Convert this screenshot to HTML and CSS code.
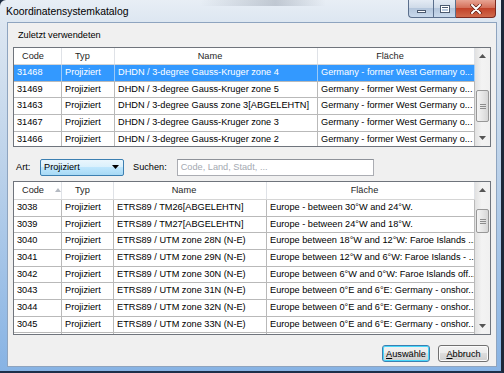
FILE: index.html
```html
<!DOCTYPE html>
<html>
<head>
    <meta charset="utf-8">
    <title>Koordinatensystemkatalog</title>
    <link rel="stylesheet" href="styles.css">
</head>
<body>
<div class="window">
    <div class="titlebar">
        <span class="title">Koordinatensystemkatalog</span>
        <div class="caption">
            <span class="cap cap-min"><span class="min-bar"></span></span>
            <span class="cap cap-max"><span class="max-box"></span></span>
            <span class="cap cap-close">
                <svg width="12" height="10" viewBox="0 0 12 10"><path d="M2 1 L10 9 M10 1 L2 9" stroke="#5a1a10" stroke-width="3.4" stroke-linecap="round"/><path d="M2 1 L10 9 M10 1 L2 9" stroke="#fff" stroke-width="2" stroke-linecap="round"/></svg>
            </span>
        </div>
    </div>

    <div class="client">
        <div class="section-label">Zuletzt verwendeten</div>

        <div class="listview recent">
            <div class="lv-body">
                <div class="lv-row lv-head">
                    <div class="hcell h-code">Code</div>
                    <div class="hcell h-typ">Typ</div>
                    <div class="hcell">Name</div>
                    <div class="hcell">Fläche</div>
                </div>
                <div class="lv-row selected">
                    <div class="cell">31468</div>
                    <div class="cell">Projiziert</div>
                    <div class="cell">DHDN / 3-degree Gauss-Kruger zone 4</div>
                    <div class="cell">Germany - former West Germany o...</div>
                </div>
                <div class="lv-row">
                    <div class="cell">31469</div>
                    <div class="cell">Projiziert</div>
                    <div class="cell">DHDN / 3-degree Gauss-Kruger zone 5</div>
                    <div class="cell">Germany - former West Germany o...</div>
                </div>
                <div class="lv-row">
                    <div class="cell">31463</div>
                    <div class="cell">Projiziert</div>
                    <div class="cell">DHDN / 3-degree Gauss zone 3[ABGELEHTN]</div>
                    <div class="cell">Germany - former West Germany o...</div>
                </div>
                <div class="lv-row">
                    <div class="cell">31467</div>
                    <div class="cell">Projiziert</div>
                    <div class="cell">DHDN / 3-degree Gauss-Kruger zone 3</div>
                    <div class="cell">Germany - former West Germany o...</div>
                </div>
                <div class="lv-row">
                    <div class="cell">31466</div>
                    <div class="cell">Projiziert</div>
                    <div class="cell">DHDN / 3-degree Gauss-Kruger zone 2</div>
                    <div class="cell">Germany - former West Germany o...</div>
                </div>
            </div>
            <div class="vscroll">
                <div class="sb-btn"><svg width="7" height="4" viewBox="0 0 7 4"><path d="M0 4 L3.5 0 L7 4 Z" fill="#555"/></svg></div>
                <div class="sb-track"><div class="sb-thumb thumb-recent"><span class="grip"></span></div></div>
                <div class="sb-btn"><svg width="7" height="4" viewBox="0 0 7 4"><path d="M0 0 L3.5 4 L7 0 Z" fill="#555"/></svg></div>
            </div>
        </div>

        <div class="filter">
            <span class="flabel">Art:</span>
            <div class="combo">
                <span>Projiziert</span>
                <svg width="7" height="4" viewBox="0 0 7 4"><path d="M0 0 L3.5 4 L7 0 Z" fill="#000"/></svg>
            </div>
            <span class="flabel search-label">Suchen:</span>
            <div class="search">Code, Land, Stadt, ...</div>
        </div>

        <div class="listview catalog">
            <div class="lv-body">
                <div class="lv-row lv-head">
                    <div class="hcell h-code">Code <svg class="sort" width="6" height="4" viewBox="0 0 6 4"><path d="M0 4 L3 0 L6 4 Z" fill="#b5bac2"/></svg></div>
                    <div class="hcell h-typ">Typ</div>
                    <div class="hcell">Name</div>
                    <div class="hcell">Fläche</div>
                </div>
                <div class="lv-row">
                    <div class="cell">3038</div>
                    <div class="cell">Projiziert</div>
                    <div class="cell">ETRS89 / TM26[ABGELEHTN]</div>
                    <div class="cell">Europe - between 30°W and 24°W.</div>
                </div>
                <div class="lv-row">
                    <div class="cell">3039</div>
                    <div class="cell">Projiziert</div>
                    <div class="cell">ETRS89 / TM27[ABGELEHTN]</div>
                    <div class="cell">Europe - between 24°W and 18°W.</div>
                </div>
                <div class="lv-row">
                    <div class="cell">3040</div>
                    <div class="cell">Projiziert</div>
                    <div class="cell">ETRS89 / UTM zone 28N (N-E)</div>
                    <div class="cell">Europe between 18°W and 12°W: Faroe Islands ...</div>
                </div>
                <div class="lv-row">
                    <div class="cell">3041</div>
                    <div class="cell">Projiziert</div>
                    <div class="cell">ETRS89 / UTM zone 29N (N-E)</div>
                    <div class="cell">Europe between 12°W and 6°W: Faroe Islands - ...</div>
                </div>
                <div class="lv-row">
                    <div class="cell">3042</div>
                    <div class="cell">Projiziert</div>
                    <div class="cell">ETRS89 / UTM zone 30N (N-E)</div>
                    <div class="cell">Europe between 6°W and 0°W: Faroe Islands off...</div>
                </div>
                <div class="lv-row">
                    <div class="cell">3043</div>
                    <div class="cell">Projiziert</div>
                    <div class="cell">ETRS89 / UTM zone 31N (N-E)</div>
                    <div class="cell">Europe between 0°E and 6°E: Germany - onshor...</div>
                </div>
                <div class="lv-row">
                    <div class="cell">3044</div>
                    <div class="cell">Projiziert</div>
                    <div class="cell">ETRS89 / UTM zone 32N (N-E)</div>
                    <div class="cell">Europe between 0°E and 6°E: Germany - onshor...</div>
                </div>
                <div class="lv-row">
                    <div class="cell">3045</div>
                    <div class="cell">Projiziert</div>
                    <div class="cell">ETRS89 / UTM zone 33N (N-E)</div>
                    <div class="cell">Europe between 0°E and 6°E: Germany - onshor...</div>
                </div>
                <div class="lv-row">
                    <div class="cell"></div>
                    <div class="cell"></div>
                    <div class="cell"></div>
                    <div class="cell"></div>
                </div>
            </div>
            <div class="vscroll">
                <div class="sb-btn"><svg width="7" height="4" viewBox="0 0 7 4"><path d="M0 4 L3.5 0 L7 4 Z" fill="#555"/></svg></div>
                <div class="sb-track"><div class="sb-thumb thumb-catalog"><span class="grip"></span></div></div>
                <div class="sb-btn"><svg width="7" height="4" viewBox="0 0 7 4"><path d="M0 0 L3.5 4 L7 0 Z" fill="#555"/></svg></div>
            </div>
        </div>

        <div class="actions">
            <button class="btn btn-default"><u>A</u>uswähle</button>
            <button class="btn"><u>A</u>bbruch</button>
        </div>
    </div>
</div>
</body>
</html>
```

FILE: styles.css
```css
* {
    box-sizing: border-box;
}

body {
    margin: 0;
    width: 504px;
    height: 373px;
    overflow: hidden;
    font-family: "Liberation Sans", Arial, sans-serif;
    font-size: 9.2px;
    color: #000;
    background: #1d2b40;
}

.window {
    width: 504px;
    height: 373px;
    display: flex;
    flex-direction: column;
    background: linear-gradient(180deg, #e8eef5 0, #dce6f1 24px, #bcd2ea 45%, #87b3e4 100%);
    border-right: 3px solid #1c2738;
    border-bottom: 2px solid #1e2f4a;
    border-top-left-radius: 6px;
}

.titlebar {
    height: 22px;
    display: flex;
    align-items: flex-start;
    background: linear-gradient(90deg, rgba(255,255,255,0) 40%, rgba(120,130,145,0.35) 55%, rgba(255,255,255,0) 65%) top / 100% 6px no-repeat;
}

.title {
    padding: 5px 0 0 6px;
    font-size: 10.4px;
    line-height: 14px;
    color: #000;
}

.caption {
    margin-left: auto;
    margin-right: 5px;
    display: flex;
    height: 18px;
}

.cap {
    height: 18px;
    display: flex;
    align-items: center;
    justify-content: center;
    border: 1px solid #5b6f8c;
    border-top: none;
}

.cap-min {
    width: 25px;
    border-bottom-left-radius: 4px;
    border-right: none;
    background: linear-gradient(180deg, #e4ebf4 0, #cdd9e8 50%, #b4c6dc 50%, #c9d9ec 100%);
}

.cap-max {
    width: 23px;
    background: linear-gradient(180deg, #e4ebf4 0, #cdd9e8 50%, #b4c6dc 50%, #c9d9ec 100%);
}

.cap-close {
    width: 40px;
    border-left: none;
    border-bottom-right-radius: 4px;
    border-color: #7b2a20;
    background: linear-gradient(180deg, #e8a493 0, #d4705a 45%, #c2432a 50%, #d06a4c 100%);
}

.min-bar {
    width: 9px;
    height: 3px;
    margin-top: 5px;
    background: #fff;
    border: 1px solid #4b5a70;
}

.max-box {
    width: 10px;
    height: 8px;
    border: 1px solid #4b5a70;
    border-top-width: 3px;
    background: #fff;
    box-shadow: inset 0 0 0 1px #fff;
}

.max-box {
    background: transparent;
    outline: 1px solid #fff;
    outline-offset: -2px;
}

.client {
    flex: 1;
    margin: 0 4px 4px 7px;
    padding: 5px 5px 4px 5px;
    background: #f0f0f0;
    border: 1px solid #8ea4bf;
    display: flex;
    flex-direction: column;
}

.section-label {
    height: 14px;
    line-height: 14px;
    padding-left: 5px;
    margin-bottom: 5px;
}

.listview {
    display: flex;
    border: 1px solid #6f747c;
    background: #fff;
    overflow: hidden;
}

.recent {
    height: 100px;
}

.catalog {
    height: 154px;
    margin-top: 5px;
}

.lv-body {
    flex: 1;
    overflow: hidden;
}

.lv-row {
    display: grid;
    height: 16.67px;
    border-bottom: 1px solid #b9b9b9;
}

.recent .lv-row {
    grid-template-columns: 48px 53px 203px 157px;
}

.catalog .lv-row {
    grid-template-columns: 48px 52px 153px 208px;
}

.recent .lv-head {
    height: 17px;
}

.catalog .lv-head {
    height: 18px;
}

.cell {
    border-right: 1px solid #b9b9b9;
    padding-left: 3px;
    line-height: 15.6px;
    white-space: nowrap;
    overflow: hidden;
}

.lv-head {
    border-bottom-color: #d5d5d5;
}

.hcell {
    border-right: 1px solid #dfe2e7;
    text-align: center;
    padding-right: 12px;
    line-height: 16px;
    color: #1e1e1e;
    white-space: nowrap;
    overflow: hidden;
}

.hcell.h-code {
    text-align: left;
    padding-left: 8px;
    padding-right: 0;
}

.hcell.h-typ {
    text-align: left;
    padding-left: 13px;
    padding-right: 0;
}

.sort {
    margin-left: 8px;
    vertical-align: 1px;
}

.selected {
    background: #3399ff;
    color: #fff;
}

.selected .cell {
    border-right-color: #9ccaf7;
}

.vscroll {
    width: 15px;
    display: flex;
    flex-direction: column;
    background: linear-gradient(90deg, #e1e1e1 0, #f3f3f3 45%, #f0f0f0 100%);
}

.sb-btn {
    height: 16px;
    display: flex;
    align-items: center;
    justify-content: center;
}

.sb-track {
    flex: 1;
    overflow: hidden;
}

.sb-thumb {
    margin: 0 1px;
    border: 1px solid #979797;
    border-radius: 2px;
    background: linear-gradient(90deg, #f4f4f4 0, #e6e6e6 50%, #d6d6d6 100%);
    display: flex;
    align-items: center;
    justify-content: center;
}

.thumb-recent {
    margin-top: 26px;
    height: 32px;
}

.thumb-catalog {
    margin-top: 11px;
    height: 24px;
}

.grip {
    width: 6px;
    height: 5px;
    border-top: 1px solid #8c8c8c;
    border-bottom: 1px solid #8c8c8c;
    background: linear-gradient(#8c8c8c, #8c8c8c) center / 100% 1px no-repeat;
}

.filter {
    height: 18px;
    margin-top: 11px;
    display: flex;
    align-items: center;
}

.flabel {
    padding-left: 3px;
    width: 27px;
}

.search-label {
    width: auto;
    padding-left: 9px;
    margin-right: 10px;
}

.combo {
    width: 84px;
    height: 17px;
    border: 1px solid #3c7fb1;
    border-radius: 2px;
    background: linear-gradient(180deg, #eaf6fd 0, #d9f0fc 50%, #bee6fd 50%, #a7d9f5 100%);
    display: flex;
    align-items: center;
    justify-content: space-between;
    padding: 0 4px 0 3px;
}

.search {
    width: 197px;
    height: 17px;
    border: 1px solid #abadb3;
    border-top-color: #8e9299;
    background: #fff;
    color: #a4a9b1;
    line-height: 15px;
    padding-left: 3px;
}

.actions {
    margin-top: 10px;
    display: flex;
    justify-content: flex-end;
    gap: 8px;
    padding-right: 2px;
}

.btn {
    height: 17px;
    padding: 0;
    border: 1px solid #707070;
    border-radius: 3px;
    background: linear-gradient(180deg, #f2f2f2 0, #ebebeb 50%, #dddddd 50%, #cfcfcf 100%);
    box-shadow: inset 0 0 0 1px #fbfbfb;
    font-family: "Liberation Sans", Arial, sans-serif;
    font-size: 9.2px;
    color: #000;
    width: 51px;
}

.btn-default {
    width: 48px;
    border-color: #3c7fb1;
    box-shadow: inset 0 0 0 1px #48d8fb;
}
```
